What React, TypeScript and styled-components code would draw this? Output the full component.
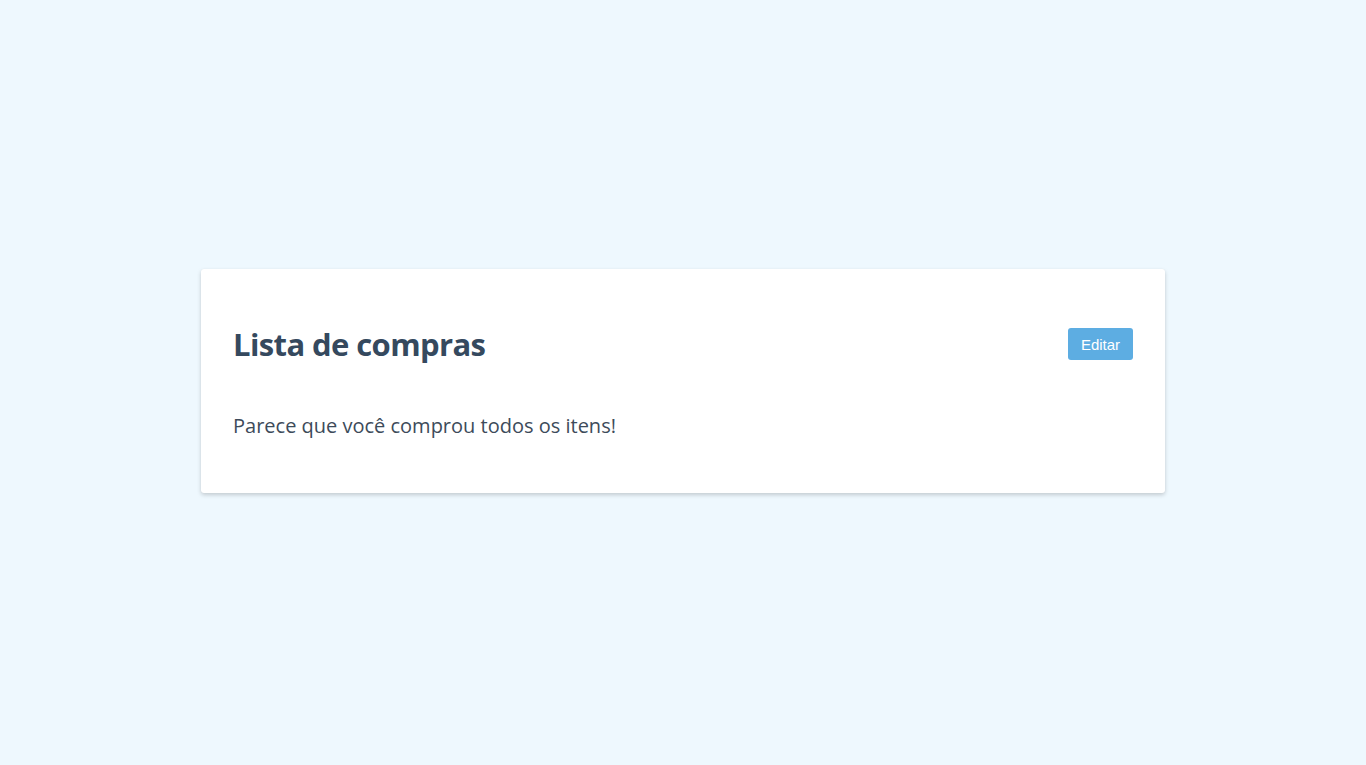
import React from "react";
import styled, { createGlobalStyle } from "styled-components";

const Global = createGlobalStyle`
  html, body { margin: 0; padding: 0; }
  body {
    background: #eef8fe;
    font-family: "Open Sans", "Noto Sans", sans-serif;
    color: #35495e;
  }
`;

const Page = styled.div`
  min-height: 765px;
  display: flex;
  align-items: center;
  justify-content: center;
`;

const Card = styled.section`
  width: 964px;
  box-sizing: border-box;
  background: #ffffff;
  border-radius: 3px;
  padding: 32px;
  box-shadow: 0 2px 4px rgba(0, 0, 0, 0.18), 0 0 1px rgba(0, 0, 0, 0.06);
  margin-top: -4px;
`;

const Header = styled.header`
  display: flex;
  align-items: center;
  justify-content: space-between;
  padding: 22px 0 20px;
`;

const Title = styled.h1`
  margin: 0;
  font-size: 31px;
  line-height: 43px;
  font-weight: 700;
  letter-spacing: -0.6px;
  color: #35495e;
`;

const Button = styled.button`
  background: #5dade2;
  color: #ffffff;
  border: none;
  border-radius: 3px;
  height: 32px;
  width: 65px;
  padding: 0;
  font-family: "Liberation Sans", Arial, sans-serif;
  font-size: 15px;
  cursor: pointer;
`;

const Message = styled.p`
  margin: 28px 0 23px;
  font-size: 20px;
  line-height: 24px;
  color: #3d4b5a;
`;

export default function App() {
  return (
    <>
      <Global />
      <Page>
        <Card>
          <Header>
            <Title>Lista de compras</Title>
            <Button>Editar</Button>
          </Header>
          <Message>Parece que você comprou todos os itens!</Message>
        </Card>
      </Page>
    </>
  );
}
